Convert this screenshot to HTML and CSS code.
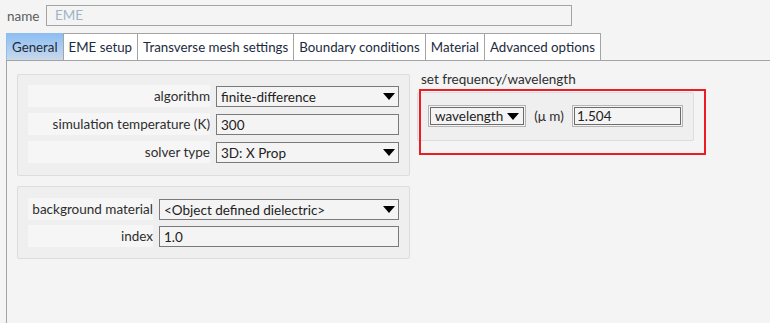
FILE: index.html
```html
<!DOCTYPE html>
<html lang="en">
<head>
  <meta charset="UTF-8">
  <title>EME properties</title>
  <link rel="stylesheet" href="styles.css">
</head>
<body>
  <div class="name-row">
    <span class="name-label">name</span>
    <div class="name-field">EME</div>
  </div>

  <div class="tabs">
    <div class="tab active">General</div>
    <div class="tab">EME setup</div>
    <div class="tab">Transverse mesh settings</div>
    <div class="tab">Boundary conditions</div>
    <div class="tab">Material</div>
    <div class="tab">Advanced options</div>
  </div>

  <div class="panel">
    <div class="col-left">
      <div class="group">
        <div class="row">
          <div class="lbl wide">algorithm</div>
          <div class="field select">finite-difference<span class="arrow"></span></div>
        </div>
        <div class="row">
          <div class="lbl wide">simulation temperature (K)</div>
          <div class="field">300</div>
        </div>
        <div class="row">
          <div class="lbl wide">solver type</div>
          <div class="field select">3D: X Prop<span class="arrow"></span></div>
        </div>
      </div>

      <div class="group second">
        <div class="row">
          <div class="lbl narrow">background material</div>
          <div class="field select">&lt;Object defined dielectric&gt;<span class="arrow"></span></div>
        </div>
        <div class="row">
          <div class="lbl narrow">index</div>
          <div class="field">1.0</div>
        </div>
      </div>
    </div>

    <div class="col-right">
      <div class="caption">set frequency/wavelength</div>
      <div class="group freq">
        <div class="sunken select kind">wavelength<span class="arrow"></span></div>
        <span class="unit">(μ m)</span>
        <div class="sunken value">1.504</div>
      </div>
      <div class="highlight"></div>
    </div>
  </div>
</body>
</html>
```

FILE: styles.css
```css
body {
  margin: 0;
  background: #f4f4f4;
  font-family: Lato, "Noto Sans", sans-serif;
  font-size: 13.5px;
  color: #2a2a2a;
  height: 323px;
  overflow: hidden;
}
.name-row {
  display: flex;
  align-items: center;
  padding: 5px 0 0 7px;
}
.name-label {
  color: #5c5c5c;
  width: 39px;
}
.name-field {
  width: 516px;
  height: 19px;
  line-height: 19px;
  padding-left: 8px;
  border: 1px solid #a4a4a4;
  color: #9fb3c6;
}
.tabs {
  display: flex;
  margin: 7px 0 0 6px;
}
.tab {
  height: 26px;
  line-height: 26px;
  padding: 0 5px;
  font-size: 13.3px;
  border: 1px solid #a4a4a4;
  border-bottom: none;
  margin-left: -1px;
  background: #ffffff;
  color: #1c2b40;
}
.tab:first-child {
  margin-left: 0;
}
.tab.active {
  border-color: #8fbdf0;
  background: linear-gradient(#8ebef4, #c9d9e9);
}
.panel {
  display: flex;
  margin-left: 6px;
  border-top: 1px solid #a4a4a4;
  border-left: 1px solid #a4a4a4;
  height: 262px;
}
.col-left {
  width: 393px;
  padding: 13px 0 0 10px;
}
.col-right {
  position: relative;
  margin-left: 7px;
  padding-top: 10px;
}
.group {
  display: flex;
  flex-direction: column;
  gap: 6px;
  padding: 10px 10px 12px;
  background: #efefef;
  border: 1px solid #dddddd;
  border-radius: 2px;
}
.group.second {
  margin-top: 10px;
  gap: 5px;
  padding-top: 11px;
  padding-bottom: 11px;
}
.row {
  display: flex;
  gap: 6px;
  height: 22px;
}
.lbl {
  background: #f6f6f6;
  text-align: right;
  line-height: 22px;
  white-space: nowrap;
  color: #2e2e2e;
}
.lbl.wide {
  width: 182px;
}
.lbl.narrow {
  width: 125px;
}
.field {
  flex: 1;
  display: flex;
  align-items: center;
  justify-content: space-between;
  height: 19px;
  margin-top: 1px;
  padding: 0 3px 0 4px;
  border: 1px solid #7a7a7a;
  background: #f4f4f4;
  color: #222;
}
.arrow {
  width: 0;
  height: 0;
  border-left: 6px solid transparent;
  border-right: 6px solid transparent;
  border-top: 7px solid #000;
}
.caption {
  line-height: 16px;
  margin-bottom: 5px;
  padding-left: 4px;
  color: #2e2e2e;
}
.group.freq {
  flex-direction: row;
  align-items: center;
  gap: 6px;
  width: 255px;
  height: 22px;
  padding: 12px 10px 13px;
}
.sunken {
  display: flex;
  align-items: center;
  justify-content: space-between;
  height: 20px;
  border: 1px solid #b4b4b4;
  box-shadow: inset 0 0 0 1px #f4f4f4, inset 0 0 0 2px #6c6c6c;
  background: #f4f4f4;
  color: #222;
}
.sunken.kind {
  width: 85px;
  padding: 0 6px 0 6px;
}
.sunken.value {
  width: 106px;
  padding-left: 4px;
}
.unit {
  width: 34px;
  text-align: center;
  color: #2e2e2e;
}
.highlight {
  position: absolute;
  left: 2px;
  top: 28px;
  width: 283px;
  height: 62px;
  border: 2px solid #ec1c24;
}
```
